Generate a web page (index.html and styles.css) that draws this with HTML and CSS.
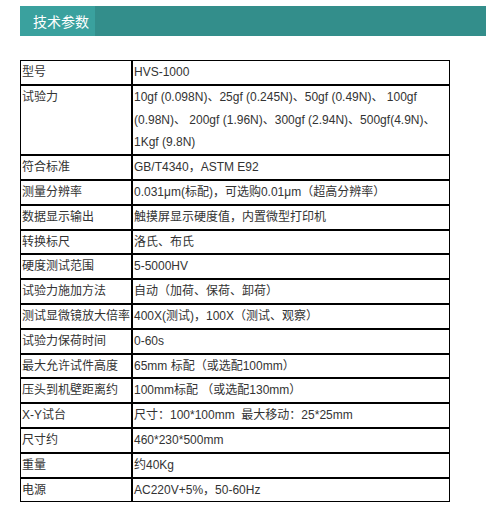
FILE: index.html
```html
<!DOCTYPE html>
<html lang="zh-CN">
<head>
<meta charset="utf-8">
<link rel="stylesheet" href="styles.css">
</head>
<body>
<div class="page">
  <div class="tabbar"><div class="tab">技术参数</div></div>
  <table class="spec">
    <colgroup><col class="c1"><col class="c2"></colgroup>
    <tr><td>型号</td><td>HVS-1000</td></tr>
    <tr><td>试验力</td><td>10gf (0.098N)、25gf (0.245N)、50gf (0.49N)、 100gf<br>(0.98N)、 200gf (1.96N)、300gf (2.94N)、500gf(4.9N)、<br>1Kgf (9.8N)</td></tr>
    <tr><td>符合标准</td><td>GB/T4340，ASTM E92</td></tr>
    <tr><td>测量分辨率</td><td>0.031μm(标配)，可选购0.01μm（超高分辨率）</td></tr>
    <tr><td>数据显示输出</td><td>触摸屏显示硬度值，内置微型打印机</td></tr>
    <tr><td>转换标尺</td><td>洛氏、布氏</td></tr>
    <tr><td>硬度测试范围</td><td>5-5000HV</td></tr>
    <tr><td>试验力施加方法</td><td>自动（加荷、保荷、卸荷）</td></tr>
    <tr><td>测试显微镜放大倍率</td><td>400X(测试)，100X（测试、观察）</td></tr>
    <tr><td>试验力保荷时间</td><td>0-60s</td></tr>
    <tr><td>最大允许试件高度</td><td>65mm 标配（或选配100mm）</td></tr>
    <tr><td>压头到机壁距离约</td><td>100mm标配 （或选配130mm）</td></tr>
    <tr><td>X-Y试台</td><td>尺寸：100*100mm&nbsp; 最大移动：25*25mm</td></tr>
    <tr><td>尺寸约</td><td>460*230*500mm</td></tr>
    <tr><td>重量</td><td>约40Kg</td></tr>
    <tr><td>电源</td><td>AC220V+5%，50-60Hz</td></tr>
  </table>
</div>
</body>
</html>
```
FILE: styles.css
```css
html, body {
  margin: 0;
  padding: 0;
  background: #fff;
}
.page {
  padding: 6px 0 0 20px;
  font-family: "Liberation Sans", "Noto Sans CJK SC", sans-serif;
  color: #333;
}
.tabbar {
  height: 30px;
  background: #338e8b;
  display: flex;
}
.tab {
  width: 75px;
  background: #3aa19e;
  color: #fff;
  font-size: 14px;
  line-height: 30px;
  padding-left: 13px;
  box-sizing: border-box;
  font-family: "Noto Sans CJK SC", sans-serif;
}
.spec {
  margin-top: 24px;
  border-collapse: separate;
  border-spacing: 0;
  width: 430px;
  table-layout: fixed;
  font-size: 12px;
}
.c1 { width: 112px; }
.c2 { width: 318px; }
.spec td {
  border: 1px solid #000;
  padding: 0 1px;
  line-height: 22.8px;
  vertical-align: top;
  white-space: nowrap;
  overflow: hidden;
}
```
